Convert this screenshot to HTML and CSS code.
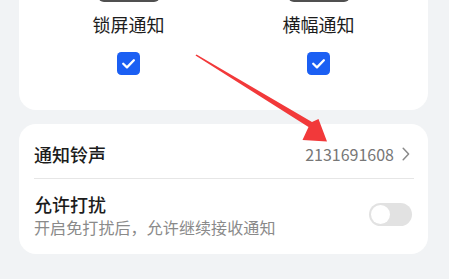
FILE: index.html
```html
<!DOCTYPE html>
<html lang="zh">
<head>
<meta charset="utf-8">
<link rel="stylesheet" href="styles.css">
</head>
<body>
<div class="page">
  <section class="card top-card">
    <div class="col">
      <div class="preview"></div>
      <div class="label">锁屏通知</div>
      <div class="check">
        <svg viewBox="0 0 24 24" width="23" height="23"><rect x="0" y="0" width="24" height="24" rx="4.5" fill="#1b5ff3"/><path d="M6.5 12.3 L10.4 16 L17.6 8.6" fill="none" stroke="#fff" stroke-width="2.4" stroke-linecap="round" stroke-linejoin="round"/></svg>
      </div>
    </div>
    <div class="col">
      <div class="preview"></div>
      <div class="label">横幅通知</div>
      <div class="check">
        <svg viewBox="0 0 24 24" width="23" height="23"><rect x="0" y="0" width="24" height="24" rx="4.5" fill="#1b5ff3"/><path d="M6.5 12.3 L10.4 16 L17.6 8.6" fill="none" stroke="#fff" stroke-width="2.4" stroke-linecap="round" stroke-linejoin="round"/></svg>
      </div>
    </div>
  </section>

  <section class="card list-card">
    <div class="row ring">
      <div class="title">通知铃声</div>
      <div class="value">
        <span>2131691608</span>
        <svg class="chev" viewBox="0 0 8 14" width="8" height="14"><path d="M1.2 1.2 L6.6 7 L1.2 12.8" fill="none" stroke="#8a8a8a" stroke-width="1.5" stroke-linecap="round" stroke-linejoin="round"/></svg>
      </div>
    </div>
    <div class="row dnd">
      <div class="texts">
        <div class="title">允许打扰</div>
        <div class="sub">开启免打扰后，允许继续接收通知</div>
      </div>
      <div class="switch"><div class="knob"></div></div>
    </div>
  </section>
</div>
<svg class="arrow" viewBox="0 0 449 279" width="449" height="279">
  <polygon points="195.5,55.5 308.5,127 302.5,140 327,141.5 318.5,119 312,122 196.5,54.5" fill="#f2393a"/>
</svg>
</body>
</html>
```

FILE: styles.css
```css
html, body {
  margin: 0;
  padding: 0;
}
body {
  width: 449px;
  height: 279px;
  overflow: hidden;
  background: #f1f3f5;
  font-family: "Noto Sans CJK SC", "Noto Sans", sans-serif;
  color: #1c1c1c;
  position: relative;
}
.page {
  display: flex;
  flex-direction: column;
  gap: 14px;
  padding: 0 21px 0 19px;
}
.card {
  background: #ffffff;
  border-radius: 17px;
}
.top-card {
  margin-top: -30px;
  height: 140px;
  display: grid;
  grid-template-columns: 190px 190px;
  justify-content: center;
  border-radius: 0 0 17px 17px;
}
.col {
  display: flex;
  flex-direction: column;
  align-items: center;
}
.preview {
  width: 62px;
  height: 32px;
  background: #505050;
  border-radius: 0 0 6px 6px;
}
.label {
  margin-top: 9px;
  font-size: 18px;
  line-height: 26px;
  height: 26px;
}
.check {
  margin-top: 15px;
  width: 23px;
  height: 23px;
  line-height: 0;
}
.list-card {
  height: 130px;
  padding: 0 14px 0 15px;
  display: flex;
  flex-direction: column;
}
.row {
  display: flex;
  align-items: center;
  justify-content: space-between;
}
.ring {
  height: 55px;
  padding-top: 6px;
  box-sizing: border-box;
  border-bottom: 1px solid #e6e6e6;
}
.title {
  font-size: 18px;
  line-height: 24px;
  font-weight: 500;
}
.value {
  display: flex;
  align-items: center;
  gap: 8px;
  color: #777777;
  font-size: 16px;
  padding-right: 4px;
}
.chev {
  display: block;
}
.dnd {
  flex: 1;
  padding-bottom: 4px;
}
.sub {
  font-size: 16px;
  line-height: 22px;
  color: #8a8a8a;
  letter-spacing: 0.1px;
}
.switch {
  width: 43px;
  height: 23px;
  border-radius: 12px;
  background: #e2e2e2;
  position: relative;
  margin-right: 2px;
}
.knob {
  position: absolute;
  left: 2px;
  top: 2px;
  width: 19px;
  height: 19px;
  border-radius: 50%;
  background: #ffffff;
}
.arrow {
  position: absolute;
  left: 0;
  top: 0;
  pointer-events: none;
}
```
